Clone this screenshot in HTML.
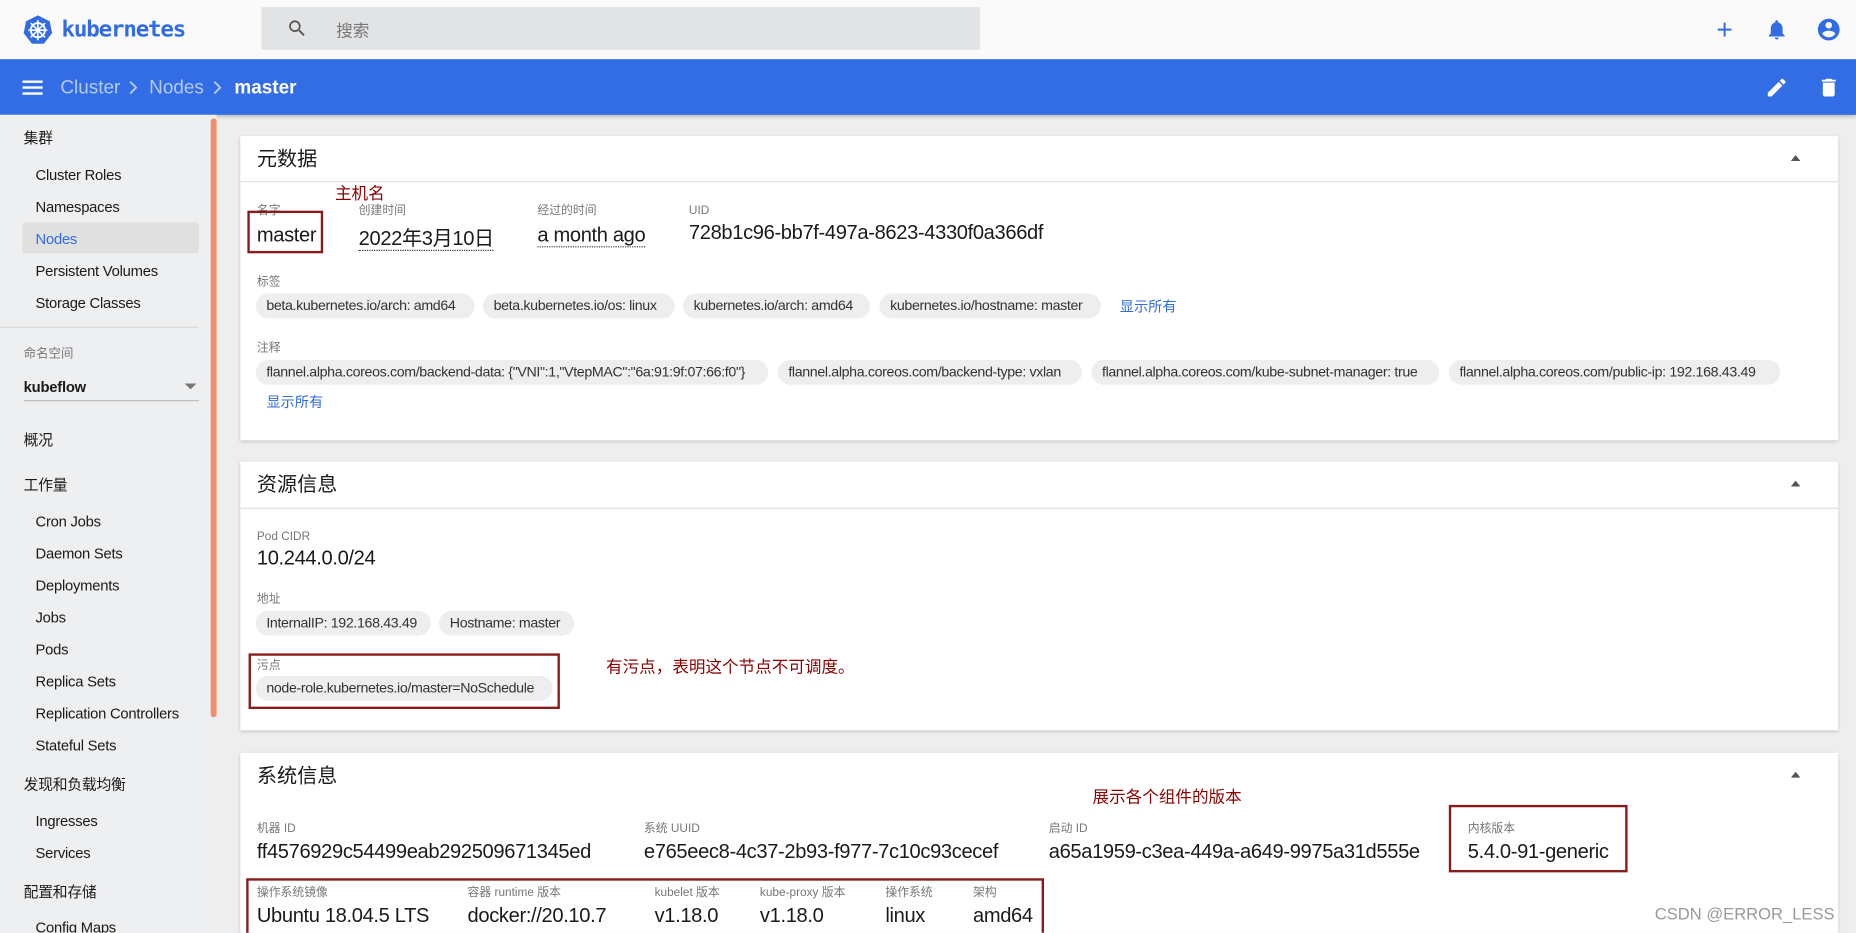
<!DOCTYPE html>
<html><head><meta charset="utf-8"><style>
*{margin:0;padding:0;box-sizing:border-box}
html,body{width:1856px;height:932px;overflow:hidden;background:#eeeeee}
body{font-family:"Liberation Sans","Noto Sans CJK SC",sans-serif;color:#1a1a1a}
#w{position:absolute;left:0;top:0;width:1568px;height:788px;transform:scale(1.18367);transform-origin:0 0;background:#eeeeee;overflow:hidden}
.a{position:absolute;white-space:nowrap}
.t{line-height:16px;height:16px}
.sb{font-size:12.5px;letter-spacing:-.2px}
.lb{font-size:10px;color:#777;line-height:12px}
.v{font-size:17px;line-height:20px;letter-spacing:-.3px}
.chip{position:absolute;height:21px;line-height:21px;border-radius:11px;background:#eeeeee;font-size:12px;letter-spacing:-.3px;padding:0 0 0 9px;white-space:nowrap;overflow:hidden;color:#333}
.card{position:absolute;left:203px;width:1350px;background:#fff;box-shadow:0 1px 3px rgba(0,0,0,.2)}
.hd{position:absolute;left:14px;font-size:17px;line-height:20px}
.ln{position:absolute;left:0;right:0;height:1px;background:#e0e0e0}
.car{position:absolute;right:32px;width:0;height:0;border-left:4px solid transparent;border-right:4px solid transparent;border-bottom:5px solid #555}
.red{color:#8b0000;font-size:14px;line-height:16px}
.box{position:absolute;border:2px solid #8b1a1a}
.blue{color:#326ce5}
.dot{border-bottom:1px dotted #333}
</style></head><body><div id="w">
<div class="a" style="left:0;top:0;width:1568px;height:50px;background:#fafafa"></div>
<svg class="a" style="left:19px;top:12px" width="26" height="26" viewBox="0 0 26 26"><polygon points="13,1 23,6 25,16 18,25 8,25 1,16 3,6" fill="#326ce5"/><circle cx="13" cy="13.5" r="6" fill="none" stroke="#fff" stroke-width="1.6"/><g stroke="#fff" stroke-width="1.4"><line x1="13" y1="5" x2="13" y2="22"/><line x1="5" y1="13.5" x2="21" y2="13.5"/><line x1="7" y1="7.5" x2="19" y2="19.5"/><line x1="19" y1="7.5" x2="7" y2="19.5"/></g></svg>
<div class="a" style="left:52px;top:14px;font-size:19px;line-height:22px;color:#326ce5;font-family:'DejaVu Sans Mono','Liberation Mono',monospace;letter-spacing:-1px;font-weight:bold">kubernetes</div>
<div class="a" style="left:221px;top:6px;width:607px;height:36px;background:#e1e3e5"></div>
<svg class="a" style="left:242px;top:15px" width="18" height="18" viewBox="0 0 24 24"><path fill="#555" d="M15.5 14h-.79l-.28-.27A6.47 6.47 0 0 0 16 9.5 6.5 6.5 0 1 0 9.5 16c1.61 0 3.09-.59 4.23-1.57l.27.28v.79l5 4.99L20.49 19l-4.99-5zm-6 0C7.01 14 5 11.990 5 9.5S7.01 5 9.5 5 14 7.01 14 9.5 11.99 14 9.5 14z"/></svg>
<div class="a" style="left:284px;top:18px;font-size:14px;line-height:16px;color:#777">搜索</div>
<svg class="a" style="left:1447px;top:15px" width="20" height="20" viewBox="0 0 24 24"><path fill="#326ce5" d="M19 13h-6v6h-2v-6H5v-2h6V5h2v6h6v2z"/></svg>
<svg class="a" style="left:1491px;top:15px" width="20" height="20" viewBox="0 0 24 24"><path fill="#326ce5" d="M12 22c1.1 0 2-.9 2-2h-4c0 1.1.89 2 2 2zm6-6v-5c0-3.07-1.64-5.640-4.5-6.32V4c0-.83-.67-1.5-1.5-1.5s-1.5.67-1.5 1.5v.68C7.63 5.36 6 7.92 6 11v5l-2 2v1h16v-1l-2-2z"/></svg>
<svg class="a" style="left:1534px;top:14px" width="22" height="22" viewBox="0 0 24 24"><path fill="#326ce5" d="M12 2C6.48 2 2 6.48 2 12s4.48 10 10 10 10-4.48 10-10S17.52 2 12 2zm0 3c1.66 0 3 1.34 3 3s-1.34 3-3 3-3-1.34-3-3 1.34-3 3-3zm0 14.2c-2.5 0-4.71-1.28-6-3.22.03-1.99 4-3.08 6-3.08 1.99 0 5.97 1.09 6 3.08-1.29 1.94-3.5 3.22-6 3.22z"/></svg>
<div class="a" style="left:0;top:50px;width:1568px;height:47px;background:#326de6;box-shadow:0 2px 3px rgba(0,0,0,.2)"></div>
<svg class="a" style="left:18px;top:65px" width="19" height="18" viewBox="0 0 19 18"><path fill="#fff" d="M1 3h17v2H1zM1 8h17v2H1zM1 13h17v2H1z"/></svg>
<div class="a" style="left:51px;top:66px;font-size:16px;line-height:18px;color:#b3c9f4">Cluster</div>
<svg class="a" style="left:107px;top:67px" width="12" height="14" viewBox="0 0 12 14"><path d="M3 2l5 5-5 5" stroke="#b3c9f4" stroke-width="1.6" fill="none"/></svg>
<div class="a" style="left:126px;top:66px;font-size:16px;line-height:18px;color:#b3c9f4">Nodes</div>
<svg class="a" style="left:178px;top:67px" width="12" height="14" viewBox="0 0 12 14"><path d="M3 2l5 5-5 5" stroke="#b3c9f4" stroke-width="1.6" fill="none"/></svg>
<div class="a" style="left:198px;top:66px;font-size:16px;line-height:18px;color:#fff;font-weight:bold">master</div>
<svg class="a" style="left:1491px;top:64px" width="20" height="20" viewBox="0 0 24 24"><path fill="#fff" d="M3 17.25V21h3.75L17.81 9.94l-3.75-3.75L3 17.25zM20.71 7.04a1 1 0 0 0 0-1.41l-2.34-2.34a1 1 0 0 0-1.41 0l-1.83 1.83 3.75 3.75 1.83-1.83z"/></svg>
<svg class="a" style="left:1535px;top:64px" width="20" height="20" viewBox="0 0 24 24"><path fill="#fff" d="M6 19c0 1.1.9 2 2 2h8c1.1 0 2-.9 2-2V7H6v12zM19 4h-3.5l-1-1h-5l-1 1H5v2h14V4z"/></svg>
<div class="a" style="left:0;top:97px;width:183px;height:691px;background:#eeeff1"></div>
<div class="a" style="left:178px;top:100px;width:5px;height:506px;background:#f0906a;border-radius:3px"></div>
<div class="a" style="left:19px;top:188px;width:149px;height:26px;background:#e0e0e0;border-radius:2px"></div>
<div class="a t sb" style="left:20px;top:109px">集群</div>
<div class="a t sb" style="left:30px;top:140px">Cluster Roles</div>
<div class="a t sb" style="left:30px;top:167px">Namespaces</div>
<div class="a t sb blue" style="left:30px;top:194px">Nodes</div>
<div class="a t sb" style="left:30px;top:221px">Persistent Volumes</div>
<div class="a t sb" style="left:30px;top:248px">Storage Classes</div>
<div class="a" style="left:0;top:276px;width:168px;height:1px;background:#d8d8d8"></div>
<div class="a t" style="left:20px;top:291px;font-size:10.5px;color:#777">命名空间</div>
<div class="a t sb" style="left:20px;top:319px;font-weight:bold">kubeflow</div>
<div class="a" style="left:156px;top:324px;border-left:5px solid transparent;border-right:5px solid transparent;border-top:5px solid #777"></div>
<div class="a" style="left:20px;top:338px;width:148px;height:1px;background:#bbb"></div>
<div class="a t sb" style="left:20px;top:364px">概况</div>
<div class="a t sb" style="left:20px;top:402px">工作量</div>
<div class="a t sb" style="left:30px;top:433px">Cron Jobs</div>
<div class="a t sb" style="left:30px;top:460px">Daemon Sets</div>
<div class="a t sb" style="left:30px;top:487px">Deployments</div>
<div class="a t sb" style="left:30px;top:514px">Jobs</div>
<div class="a t sb" style="left:30px;top:541px">Pods</div>
<div class="a t sb" style="left:30px;top:568px">Replica Sets</div>
<div class="a t sb" style="left:30px;top:595px">Replication Controllers</div>
<div class="a t sb" style="left:30px;top:622px">Stateful Sets</div>
<div class="a t sb" style="left:20px;top:655px">发现和负载均衡</div>
<div class="a t sb" style="left:30px;top:686px">Ingresses</div>
<div class="a t sb" style="left:30px;top:713px">Services</div>
<div class="a t sb" style="left:20px;top:746px">配置和存储</div>
<div class="a t sb" style="left:30px;top:776px">Config Maps</div>
<div class="card" style="top:115px;height:257px">
<div class="hd" style="top:10px">元数据</div><div class="car" style="top:16px"></div><div class="ln" style="top:38px"></div>
</div>
<div class="a red" style="left:283px;top:155px">主机名</div>
<div class="a lb" style="left:217px;top:173px">名字</div>
<div class="a lb" style="left:303px;top:173px">创建时间</div>
<div class="a lb" style="left:454px;top:173px">经过的时间</div>
<div class="a lb" style="left:582px;top:173px">UID</div>
<div class="a v" style="left:217px;top:189px">master</div>
<div class="a v dot" style="left:303px;top:193px;line-height:18px">2022年3月10日</div>
<div class="a v dot" style="left:454px;top:190px;line-height:18px">a month ago</div>
<div class="a v" style="left:582px;top:187px">728b1c96-bb7f-497a-8623-4330f0a366df</div>
<div class="box" style="left:209px;top:178px;width:64px;height:36px"></div>
<div class="a lb" style="left:217px;top:233px">标签</div>
<div class="chip" style="left:216px;top:248px;width:185px">beta.kubernetes.io/arch: amd64</div>
<div class="chip" style="left:408px;top:248px;width:162px">beta.kubernetes.io/os: linux</div>
<div class="chip" style="left:577px;top:248px;width:158px">kubernetes.io/arch: amd64</div>
<div class="chip" style="left:743px;top:248px;width:187px">kubernetes.io/hostname: master</div>
<div class="a blue" style="left:946px;top:252px;font-size:12px;line-height:14px">显示所有</div>
<div class="a lb" style="left:217px;top:289px">注释</div>
<div class="chip" style="left:216px;top:304px;width:433px">flannel.alpha.coreos.com/backend-data: {"VNI":1,"VtepMAC":"6a:91:9f:07:66:f0"}</div>
<div class="chip" style="left:657px;top:304px;width:257px">flannel.alpha.coreos.com/backend-type: vxlan</div>
<div class="chip" style="left:922px;top:304px;width:294px">flannel.alpha.coreos.com/kube-subnet-manager: true</div>
<div class="chip" style="left:1224px;top:304px;width:280px">flannel.alpha.coreos.com/public-ip: 192.168.43.49</div>
<div class="a blue" style="left:225px;top:333px;font-size:12px;line-height:14px">显示所有</div>
<div class="card" style="top:390px;height:227px">
<div class="hd" style="top:10px">资源信息</div><div class="car" style="top:16px"></div><div class="ln" style="top:39px"></div>
</div>
<div class="a lb" style="left:217px;top:448px">Pod CIDR</div>
<div class="a v" style="left:217px;top:462px">10.244.0.0/24</div>
<div class="a lb" style="left:217px;top:501px">地址</div>
<div class="chip" style="left:216px;top:516px;width:148px">InternalIP: 192.168.43.49</div>
<div class="chip" style="left:371px;top:516px;width:114px">Hostname: master</div>
<div class="a lb" style="left:217px;top:557px">污点</div>
<div class="chip" style="left:216px;top:571px;width:251px">node-role.kubernetes.io/master=NoSchedule</div>
<div class="box" style="left:210px;top:552px;width:263px;height:47px"></div>
<div class="a red" style="left:512px;top:555px">有污点，表明这个节点不可调度。</div>
<div class="card" style="top:636px;height:160px">
<div class="hd" style="top:10px">系统信息</div><div class="car" style="top:16px"></div>
</div>
<div class="a red" style="left:923px;top:665px">展示各个组件的版本</div>
<div class="a lb" style="left:217px;top:695px">机器 ID</div>
<div class="a lb" style="left:544px;top:695px">系统 UUID</div>
<div class="a lb" style="left:886px;top:695px">启动 ID</div>
<div class="a lb" style="left:1240px;top:695px">内核版本</div>
<div class="a v" style="left:217px;top:710px">ff4576929c54499eab292509671345ed</div>
<div class="a v" style="left:544px;top:710px">e765eec8-4c37-2b93-f977-7c10c93cecef</div>
<div class="a v" style="left:886px;top:710px">a65a1959-c3ea-449a-a649-9975a31d555e</div>
<div class="a v" style="left:1240px;top:710px">5.4.0-91-generic</div>
<div class="box" style="left:1224px;top:680px;width:151px;height:57px"></div>
<div class="a lb" style="left:217px;top:749px">操作系统镜像</div>
<div class="a lb" style="left:395px;top:749px">容器 runtime 版本</div>
<div class="a lb" style="left:553px;top:749px">kubelet 版本</div>
<div class="a lb" style="left:642px;top:749px">kube-proxy 版本</div>
<div class="a lb" style="left:748px;top:749px">操作系统</div>
<div class="a lb" style="left:822px;top:749px">架构</div>
<div class="a v" style="left:217px;top:764px">Ubuntu 18.04.5 LTS</div>
<div class="a v" style="left:395px;top:764px">docker://20.10.7</div>
<div class="a v" style="left:553px;top:764px">v1.18.0</div>
<div class="a v" style="left:642px;top:764px">v1.18.0</div>
<div class="a v" style="left:748px;top:764px">linux</div>
<div class="a v" style="left:822px;top:764px">amd64</div>
<div class="box" style="left:208px;top:742px;width:674px;height:50px"></div>
<div class="a" style="left:1398px;top:764px;font-size:14px;line-height:16px;color:#999">CSDN @ERROR_LESS</div>
</div></body></html>
